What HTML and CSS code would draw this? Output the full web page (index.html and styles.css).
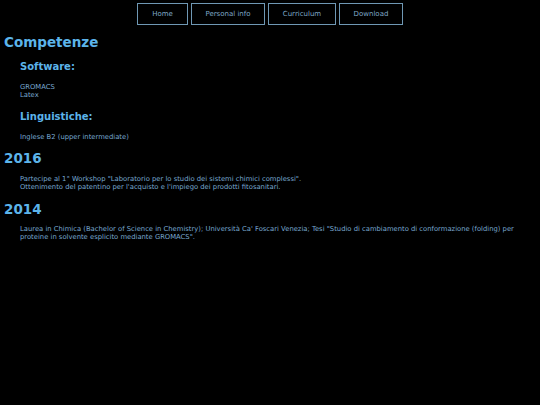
FILE: index.html
```html
<!DOCTYPE html>
<html>
<head>
<meta charset="utf-8">
<link rel="stylesheet" href="styles.css">
</head>
<body>
<nav class="nav">
  <a class="btn btn-home">Home</a>
  <a class="btn btn-info">Personal info</a>
  <a class="btn btn-cv">Curriculum</a>
  <a class="btn btn-dl">Download</a>
</nav>
<main class="content">
  <h1 class="h1">Competenze</h1>
  <section class="sub">
    <h2 class="h2">Software:</h2>
    <p class="txt">GROMACS<br>Latex</p>
    <h2 class="h2">Linguistiche:</h2>
    <p class="txt">Inglese B2 (upper intermediate)</p>
  </section>
  <h1 class="h1">2016</h1>
  <section class="sub">
    <p class="txt txt-first">Partecipe al 1° Workshop "Laboratorio per lo studio dei sistemi chimici complessi".<br>Ottenimento del patentino per l'acquisto e l'impiego dei prodotti fitosanitari.</p>
  </section>
  <h1 class="h1">2014</h1>
  <section class="sub">
    <p class="txt txt-first">Laurea in Chimica (Bachelor of Science in Chemistry); Università Ca' Foscari Venezia; Tesi "Studio di cambiamento di conformazione (folding) per proteine in solvente esplicito mediante GROMACS".</p>
  </section>
</main>
</body>
</html>
```
FILE: styles.css
```css
html, body {
  margin: 0;
  padding: 0;
  background: #000;
}
body {
  font-family: "DejaVu Sans", Verdana, sans-serif;
  color: #78a8d0;
  width: 540px;
  height: 405px;
  overflow: hidden;
}
.nav {
  display: flex;
  justify-content: center;
  gap: 3px;
  padding-top: 3px;
}
.btn {
  display: flex;
  align-items: center;
  justify-content: center;
  height: 20px;
  border: 1px solid #6f98b4;
  color: #7fa8c8;
  font-size: 7px;
  box-sizing: content-box;
}
.btn-home { width: 49px; }
.btn-info { width: 72px; }
.btn-cv { width: 66px; }
.btn-dl { width: 62px; }
.content {
  padding: 0 4px;
}
.h1 {
  margin: 9px 0 0 0;
  font-size: 13.5px;
  font-weight: bold;
  color: #5cb4ea;
  line-height: 16px;
}
.sub {
  padding-left: 16px;
}
.h2 {
  font-size: 10px;
  font-weight: bold;
  color: #5cb4ea;
  margin: 11px 0 0 0;
  line-height: 12px;
}
.txt {
  font-size: 6.8px;
  line-height: 8.4px;
  margin: 10px 0 0 0;
  color: #78a8d0;
}
.txt-first {
  margin-top: 8.5px;
}
```
